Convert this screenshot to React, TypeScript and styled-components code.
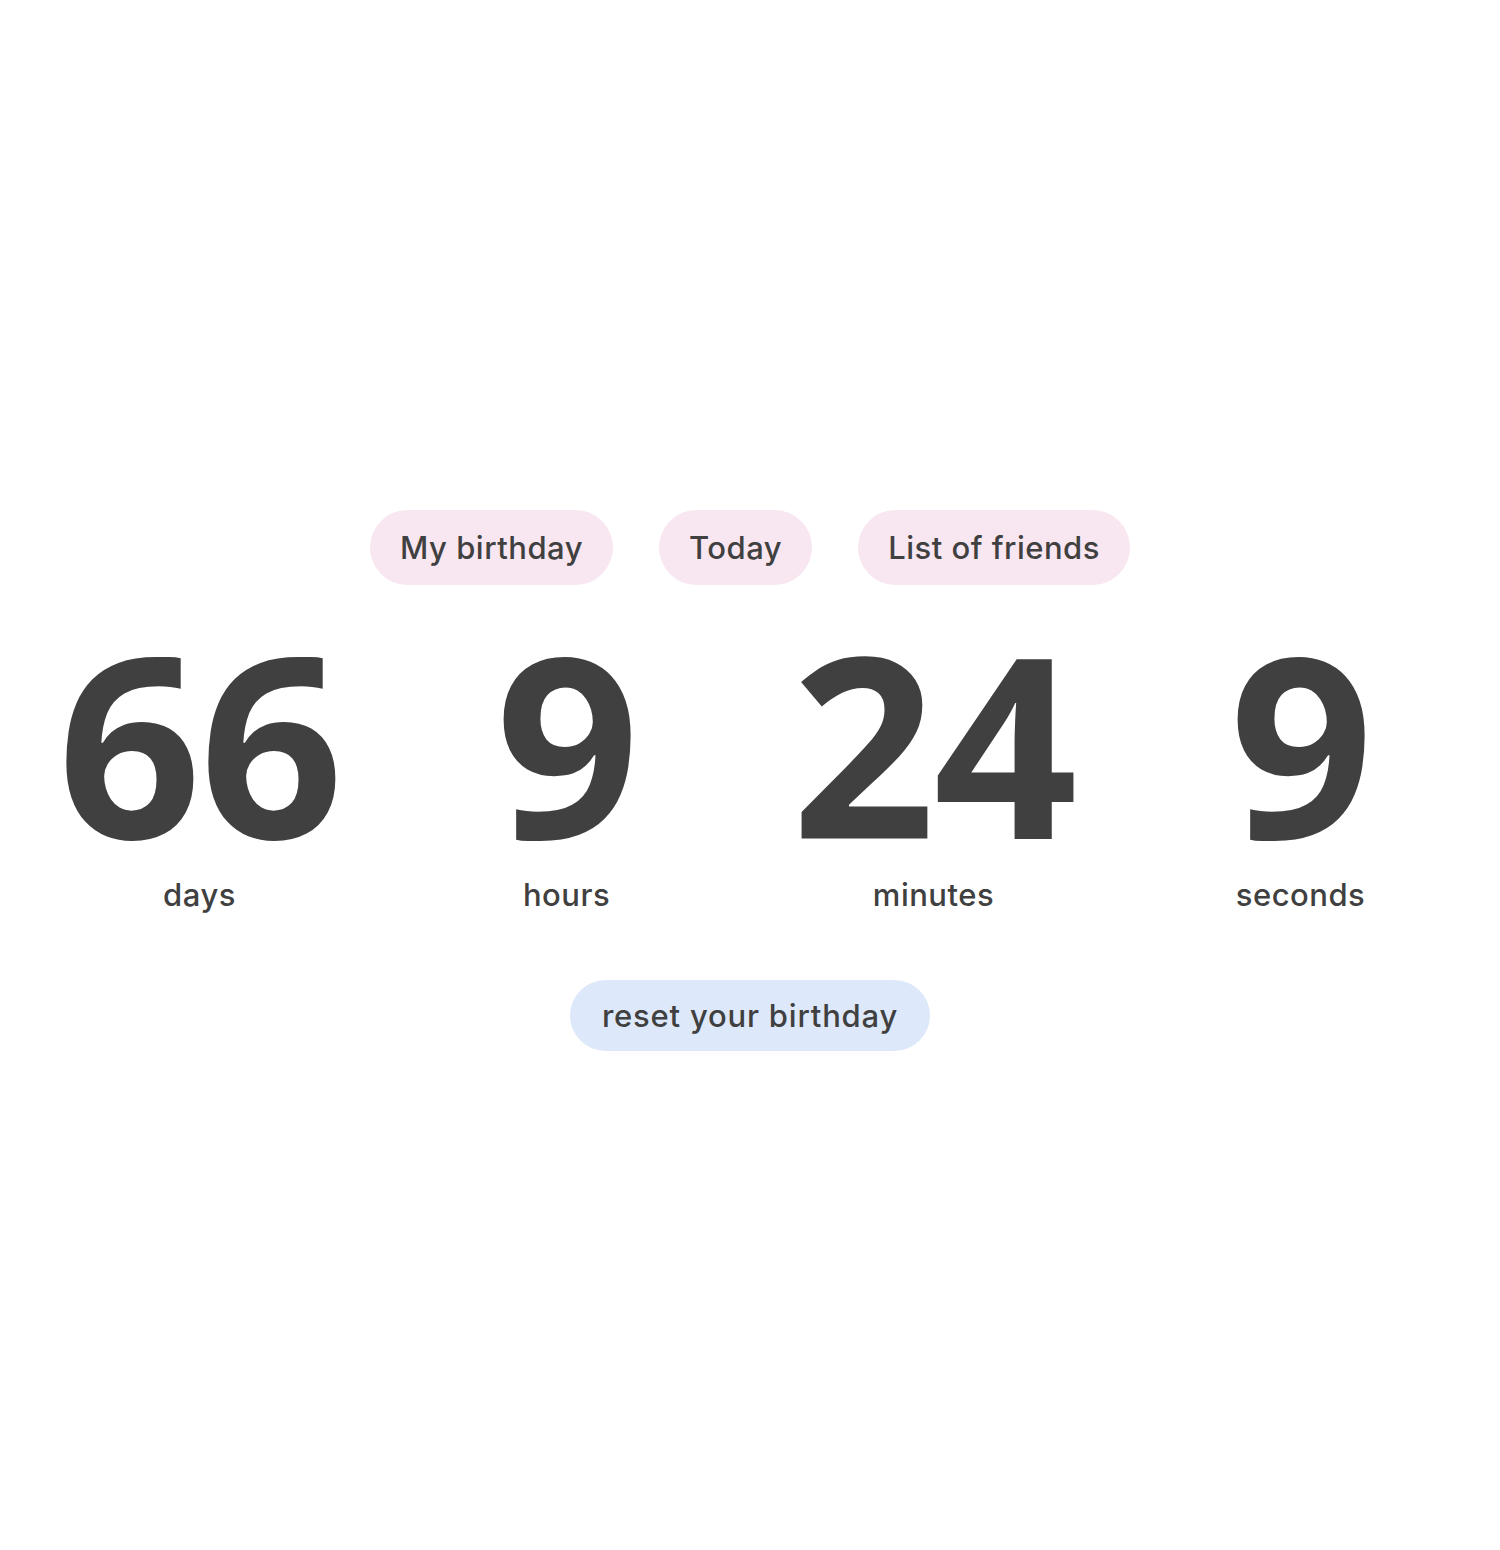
import styled, { createGlobalStyle } from 'styled-components';

const GlobalStyle = createGlobalStyle`
  body {
    margin: 0;
    background: #ffffff;
    font-family: Inter, "Noto Sans", sans-serif;
    color: #404040;
  }
`;

const Page = styled.div`
  min-height: 100vh;
  display: flex;
  flex-direction: column;
  align-items: center;
  justify-content: center;
  padding: 10px 16px 0;
  box-sizing: border-box;
`;

const Nav = styled.nav`
  display: flex;
  justify-content: center;
  gap: 46px;
`;

const Pill = styled.button<{ tone: 'pink' | 'blue' }>`
  font-family: Inter, "Noto Sans", sans-serif;
  font-size: 31px;
  font-weight: 500;
  letter-spacing: 0.5px;
  color: #404040;
  background: ${(p) => (p.tone === 'pink' ? '#f8e6f0' : '#dde8fa')};
  border: none;
  border-radius: 40px;
  padding: 0 30px;
  height: 75px;
  cursor: pointer;
`;

const ResetPill = styled(Pill)`
  height: 71px;
  padding: 0 32px;
  letter-spacing: 0.8px;
`;

const Counter = styled.div`
  width: 100%;
  display: grid;
  grid-template-columns: repeat(4, 1fr);
  margin-top: 31px;
`;

const Unit = styled.div`
  display: flex;
  flex-direction: column;
  align-items: center;
`;

const Value = styled.div`
  font-family: "Open Sans", "Noto Sans", sans-serif;
  font-weight: 700;
  font-size: 252px;
  line-height: 1;
  letter-spacing: -2px;
  color: #404040;
`;

const Label = styled.div`
  font-size: 31px;
  font-weight: 500;
  letter-spacing: 0.5px;
  margin-top: 8px;
`;

const Footer = styled.div`
  margin-top: 67px;
`;

const units = [
  { value: 66, label: 'days' },
  { value: 9, label: 'hours' },
  { value: 24, label: 'minutes' },
  { value: 9, label: 'seconds' },
];

export default function App() {
  return (
    <>
      <GlobalStyle />
      <Page>
        <Nav>
          <Pill tone="pink">My birthday</Pill>
          <Pill tone="pink">Today</Pill>
          <Pill tone="pink">List of friends</Pill>
        </Nav>
        <Counter>
          {units.map((u) => (
            <Unit key={u.label}>
              <Value>{u.value}</Value>
              <Label>{u.label}</Label>
            </Unit>
          ))}
        </Counter>
        <Footer>
          <ResetPill tone="blue">reset your birthday</ResetPill>
        </Footer>
      </Page>
    </>
  );
}
